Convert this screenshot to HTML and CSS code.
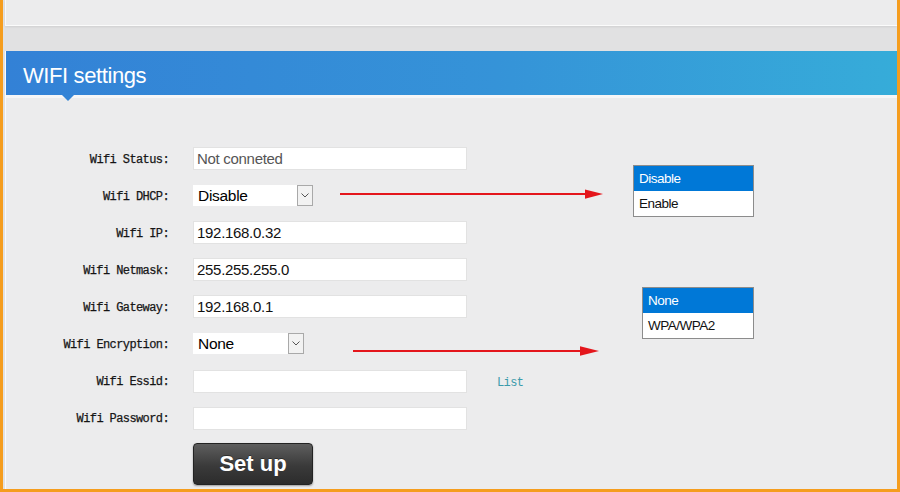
FILE: index.html
```html
<!DOCTYPE html>
<html lang="en">
<head>
    <meta charset="UTF-8">
    <meta name="viewport" content="width=device-width, initial-scale=1.0">
    <title>WIFI settings</title>
    <link rel="stylesheet" href="styles.css">
</head>
<body>
    <div class="frame">
        <div class="top-bar"></div>

        <div class="panel">
            <h1 class="panel-title">WIFI settings</h1>

            <form class="wifi-form">
                <label class="field-label" for="status">Wifi Status:</label>
                <input class="text-input muted" id="status" type="text" value="Not conneted" readonly>
                <span></span>

                <label class="field-label">Wifi DHCP:</label>
                <div class="fake-select dhcp">
                    <span class="select-value">Disable</span>
                    <span class="select-arrow">
                        <svg width="8" height="5" viewBox="0 0 8 5"><path d="M0.5 0.5 L4 4 L7.5 0.5" fill="none" stroke="#555" stroke-width="1"/></svg>
                    </span>
                </div>
                <span></span>

                <label class="field-label" for="ip">Wifi IP:</label>
                <input class="text-input" id="ip" type="text" value="192.168.0.32">
                <span></span>

                <label class="field-label" for="netmask">Wifi Netmask:</label>
                <input class="text-input" id="netmask" type="text" value="255.255.255.0">
                <span></span>

                <label class="field-label" for="gateway">Wifi Gateway:</label>
                <input class="text-input" id="gateway" type="text" value="192.168.0.1">
                <span></span>

                <label class="field-label">Wifi Encryption:</label>
                <div class="fake-select encryption">
                    <span class="select-value">None</span>
                    <span class="select-arrow">
                        <svg width="8" height="5" viewBox="0 0 8 5"><path d="M0.5 0.5 L4 4 L7.5 0.5" fill="none" stroke="#555" stroke-width="1"/></svg>
                    </span>
                </div>
                <span></span>

                <label class="field-label" for="essid">Wifi Essid:</label>
                <input class="text-input" id="essid" type="text">
                <a class="list-link" href="#">List</a>

                <label class="field-label" for="password">Wifi Password:</label>
                <input class="text-input" id="password" type="text">
                <span></span>

                <span></span>
                <div><button class="setup-button" type="button">Set up</button></div>
                <span></span>
            </form>

            <!-- annotation arrows pointing at the opened option lists -->
            <svg class="arrows" width="891" height="440" viewBox="0 0 891 440">
                <line x1="334" y1="143" x2="582" y2="143" stroke="#e4161c" stroke-width="2"/>
                <polygon points="579,138.5 597,143 579,147.7" fill="#e4161c"/>
                <line x1="347" y1="300" x2="576" y2="300" stroke="#e4161c" stroke-width="2"/>
                <polygon points="574,295.2 593,300 574,304.8" fill="#e4161c"/>
            </svg>

            <ul class="option-list dhcp-options">
                <li class="selected">Disable</li>
                <li>Enable</li>
            </ul>

            <ul class="option-list enc-options">
                <li class="selected">None</li>
                <li>WPA/WPA2</li>
            </ul>
        </div>
    </div>
</body>
</html>
```

FILE: styles.css
```css
:root {
    --orange: #f59d1e;
    --page-bg: #e1e1e2;
    --panel-bg: #ececed;
    --highlight: #0078d7;
}

body {
    margin: 0;
    box-sizing: border-box;
    height: 100vh;
    overflow: hidden;
    background: var(--page-bg);
    border-left: 3px solid var(--orange);
    border-right: 3px solid var(--orange);
    border-bottom: 3px solid var(--orange);
    font-family: "Liberation Sans", Arial, sans-serif;
}

.frame {
    display: flex;
    flex-direction: column;
    padding-left: 2px;
    height: 100%;
}

.top-bar {
    flex: none;
    height: 25px;
    background: #ececed;
    border-left: 1px solid #fafafa;
    border-bottom: 1px solid #fbfbfb;
    box-shadow: 0 1px 2px rgba(0, 0, 0, 0.08);
    margin-bottom: 25px;
}

.panel {
    position: relative;
    flex: 1;
    min-height: 0;
    overflow: hidden;
    background: var(--panel-bg);
    border-left: 1px solid #fbfbfb;
}

.panel-title {
    position: relative;
    z-index: 1;
    margin: 0;
    height: 44px;
    box-sizing: border-box;
    padding: 12px 0 0 17px;
    font-size: 22px;
    font-weight: normal;
    color: #fff;
    letter-spacing: -0.4px;
    background: linear-gradient(to right, #3381d6, #3593d8 55%, #36acd9);
}

.panel-title::after {
    content: "";
    position: absolute;
    left: 56px;
    bottom: -6px;
    border-left: 6px solid transparent;
    border-right: 6px solid transparent;
    border-top: 6px solid #3384d6;
}

.wifi-form {
    display: grid;
    grid-template-columns: 163px 274px auto;
    grid-auto-rows: minmax(23px, auto);
    column-gap: 24px;
    row-gap: 14.1px;
    align-items: center;
    border-top: 3px solid #f6f6f7;
    padding-top: 49px;
    margin: 0;
}

.field-label {
    text-align: right;
    font-family: "Liberation Mono", "Courier New", monospace;
    font-size: 12px;
    letter-spacing: -0.6px;
    color: #111;
    padding-top: 2px;
    -webkit-text-stroke: 0.25px #222;
}

.text-input {
    box-sizing: border-box;
    width: 274px;
    height: 23px;
    margin: 0;
    padding: 0 3px;
    border: 1px solid #e2e2e2;
    background: #fff;
    font-family: "Liberation Sans", Arial, sans-serif;
    font-size: 15px;
    letter-spacing: -0.3px;
    color: #111;
    outline: none;
}

.text-input.muted {
    color: #555;
}

.fake-select {
    display: flex;
    align-items: stretch;
    height: 21px;
    background: #fff;
    box-sizing: border-box;
}

.fake-select.dhcp {
    width: 120px;
}

.fake-select.encryption {
    width: 111px;
}

.select-value {
    flex: 1;
    padding-left: 5px;
    font-size: 15.5px;
    letter-spacing: -0.3px;
    line-height: 21px;
    color: #000;
}

.select-arrow {
    width: 16px;
    box-sizing: border-box;
    border: 1px solid #a9a9a9;
    background: #f2f2f2;
    display: flex;
    align-items: center;
    justify-content: center;
}

.list-link {
    margin-left: 6px;
    font-family: "Liberation Mono", "Courier New", monospace;
    font-size: 12px;
    letter-spacing: -0.6px;
    color: #3b9bab;
    text-decoration: none;
    padding-top: 3px;
}

.setup-button {
    display: block;
    width: 120px;
    height: 42px;
    margin-top: -1px;
    border: 1px solid #232323;
    border-radius: 4px;
    background: linear-gradient(to bottom, #5e5e5e, #3a3a3a 55%, #2c2c2c);
    box-shadow: 0 1px 2px rgba(0, 0, 0, 0.35);
    color: #fff;
    font-family: "Liberation Sans", Arial, sans-serif;
    font-size: 22px;
    font-weight: bold;
    text-shadow: 0 -1px 0 rgba(0, 0, 0, 0.4);
    cursor: pointer;
}

.arrows {
    position: absolute;
    left: 0;
    top: 0;
    pointer-events: none;
}

.option-list {
    position: absolute;
    margin: 0;
    padding: 0;
    list-style: none;
    background: #fff;
    border: 1px solid #8c8c8c;
    font-family: "Liberation Sans", Arial, sans-serif;
    font-size: 13.5px;
    letter-spacing: -0.5px;
    color: #111;
}

.option-list li {
    height: 25px;
    line-height: 25px;
    padding-left: 5px;
}

.option-list li.selected {
    background: var(--highlight);
    color: #fff;
}

.dhcp-options {
    left: 627px;
    top: 114px;
    width: 119px;
}

.enc-options {
    left: 636px;
    top: 236px;
    width: 110px;
}
```
